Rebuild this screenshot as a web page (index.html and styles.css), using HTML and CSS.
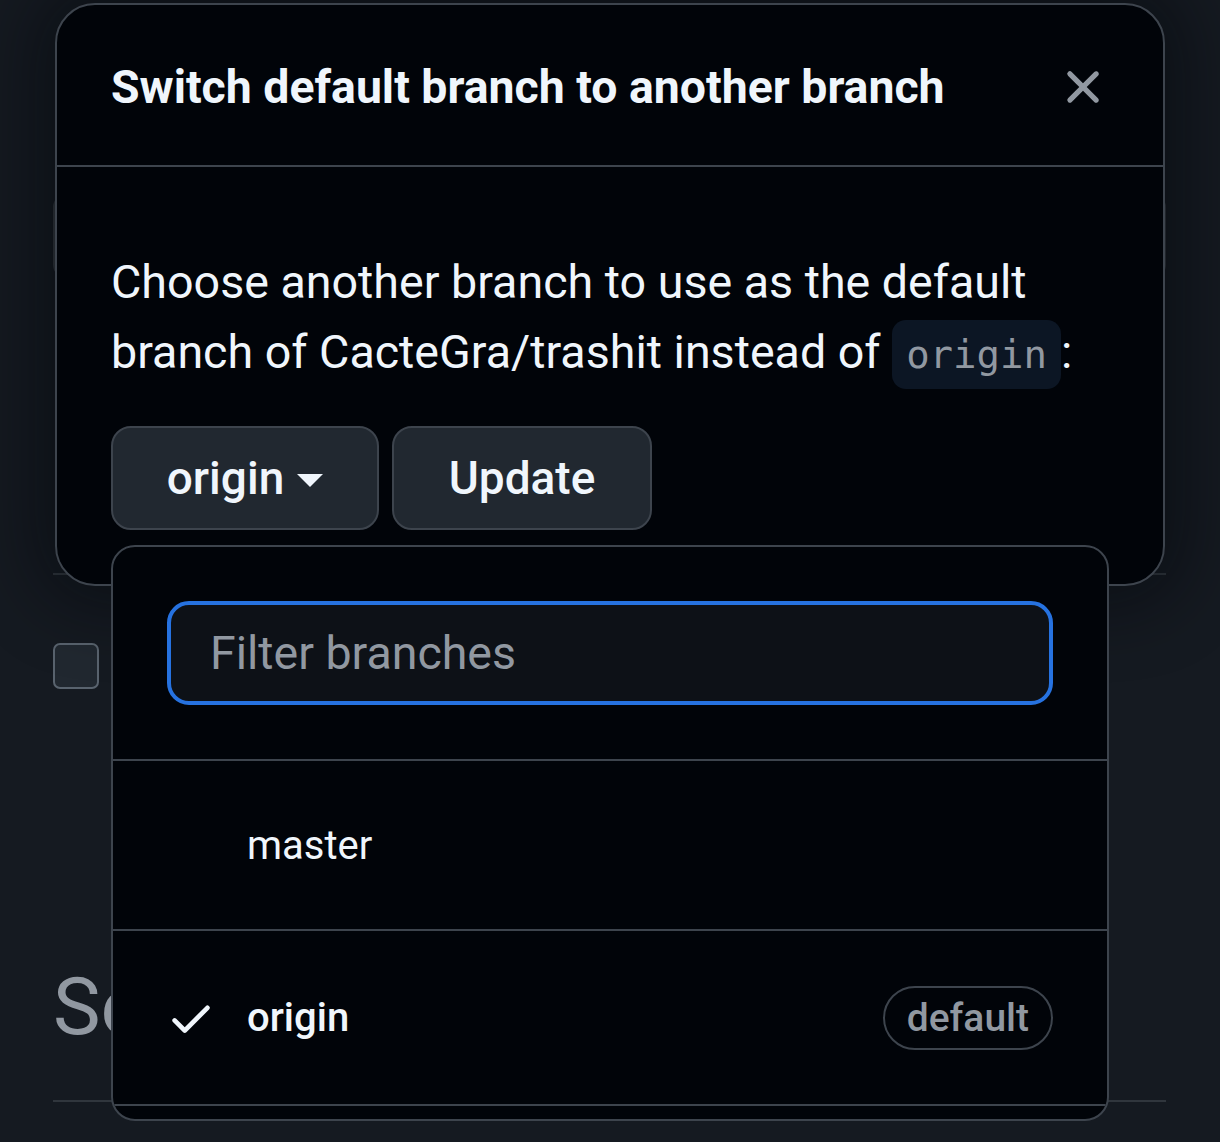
FILE: index.html
```html
<!DOCTYPE html>
<html lang="en">
<head>
<meta charset="utf-8">
<title>Switch default branch</title>
<link rel="stylesheet" href="styles.css">
</head>
<body>
<div class="page">
  <div class="bg-box"></div>
  <div class="bg-rule first"></div>
  <div class="bg-check"></div>
  <div class="bg-heading">Se</div>
  <div class="bg-rule last"></div>
</div>

<div class="modal">
  <div class="modal-header">
    <h2 class="modal-title">Switch default branch to another branch</h2>
    <svg class="close" viewBox="0 0 16 16" width="56" height="56"><path fill="currentColor" d="M3.72 3.72a.75.75 0 0 1 1.06 0L8 6.94l3.22-3.22a.749.749 0 0 1 1.275.326.749.749 0 0 1-.215.734L9.06 8l3.22 3.22a.749.749 0 0 1-.326 1.275.749.749 0 0 1-.734-.215L8 9.06l-3.220 3.22a.751.751 0 0 1-1.042-.018.751.751 0 0 1-.018-1.042L6.94 8 3.720 4.78a.75.75 0 0 1 0-1.06Z"/></svg>
  </div>
  <div class="modal-body">
    <p class="desc">Choose another branch to use as the default branch of CacteGra/trashit instead of <code>origin</code>:</p>
    <div class="actions">
      <button class="btn btn-select">origin<span class="caret"></span></button>
      <button class="btn btn-update">Update</button>
    </div>
  </div>
</div>

<div class="dropdown">
  <div class="filter">
    <div class="filter-input">Filter branches</div>
  </div>
  <div class="item">
    <span class="icon"></span>
    <span class="name">master</span>
  </div>
  <div class="item selected">
    <span class="icon"><svg viewBox="0 0 16 16" width="50" height="50"><path fill="currentColor" d="M13.78 4.22a.75.75 0 0 1 0 1.06l-7.25 7.25a.75.75 0 0 1-1.06 0L2.22 9.28a.751.751 0 0 1 .018-1.042.751.751 0 0 1 1.042-.018L6 10.94l6.72-6.72a.75.75 0 0 1 1.060 0Z"/></svg></span>
    <span class="name">origin</span>
    <span class="badge">default</span>
  </div>
  <div class="list-end"></div>
</div>
</body>
</html>
```

FILE: styles.css
```css
* { box-sizing: border-box; }

html, body {
  margin: 0;
  padding: 0;
}

body {
  width: 1220px;
  height: 1142px;
  overflow: hidden;
  background: #151a21;
  font-family: Roboto, "Noto Sans", sans-serif;
  color: #f0f6fc;
  position: relative;
}

/* background page */
.page {
  padding: 0 54px 0 53px;
  display: flex;
  flex-direction: column;
}

.bg-box {
  margin-top: 195px;
  height: 82px;
  border: 2px solid #30363d;
  border-radius: 12px;
}

.bg-rule {
  height: 2px;
  background: #30363d;
}

.bg-rule.first { margin-top: 296px; }

.bg-check {
  margin-top: 68px;
  width: 46px;
  height: 46px;
  border: 2px solid #59636e;
  border-radius: 7px;
  background: #212830;
}

.bg-heading {
  margin-top: 268px;
  font-size: 80px;
  line-height: 100px;
  color: #9198a1;
  white-space: nowrap;
}

.bg-rule.last { margin-top: 43px; }

/* modal */
.modal {
  position: absolute;
  left: 55px;
  top: 3px;
  width: 1110px;
  height: 583px;
  background: #010409;
  border: 2px solid #3d444d;
  border-radius: 40px;
  box-shadow: 0 0 70px 20px rgba(1, 4, 9, 0.45);
  display: flex;
  flex-direction: column;
}

.modal-header {
  height: 162px;
  border-bottom: 2px solid #3d444d;
  display: flex;
  align-items: center;
  justify-content: space-between;
  padding: 4px 52px 0 54px;
}

.modal-title {
  margin: 0;
  font-size: 46.4px;
  font-weight: 700;
  color: #f0f6fc;
}

.close {
  color: #9198a1;
  display: block;
}

.modal-body {
  padding: 80px 54px 0;
}

.desc {
  margin: 0;
  font-size: 46.6px;
  line-height: 70px;
  color: #f0f6fc;
}

.desc code {
  font-family: "DejaVu Sans Mono", "Liberation Mono", monospace;
  font-size: 39px;
  color: #9198a1;
  background: #0c1624;
  border-radius: 14px;
  padding: 12px 14px;
}

.actions {
  margin-top: 36px;
  display: flex;
  gap: 13px;
}

.btn {
  height: 104px;
  background: #212830;
  border: 2px solid #3d444d;
  border-radius: 20px;
  color: #f0f6fc;
  font-family: Roboto, "Noto Sans", sans-serif;
  font-size: 46px;
  font-weight: 500;
  display: flex;
  align-items: center;
  justify-content: center;
  padding: 0;
}

.btn-select { width: 268px; gap: 13px; }
.btn-update { width: 260px; }

.caret {
  width: 0;
  height: 0;
  border-left: 13px solid transparent;
  border-right: 13px solid transparent;
  border-top: 13px solid #f0f6fc;
  margin-top: 4px;
}

/* dropdown menu */
.dropdown {
  position: absolute;
  left: 111px;
  top: 545px;
  width: 998px;
  height: 576px;
  background: #010409;
  border: 2px solid #3d444d;
  border-radius: 24px;
  overflow: hidden;
  display: flex;
  flex-direction: column;
}

.filter {
  padding: 54px;
  border-bottom: 2px solid #3d444d;
}

.filter-input {
  height: 104px;
  border: 4px solid #2672e0;
  border-radius: 22px;
  background: #0d1117;
  color: #9198a1;
  font-size: 46.5px;
  display: flex;
  align-items: center;
  padding-left: 39px;
}

.item {
  display: flex;
  align-items: center;
  height: 170px;
  padding: 0 54px 0 56px;
  border-bottom: 2px solid #3d444d;
  font-size: 40px;
}

.item.selected {
  height: 175px;
  font-weight: 500;
}

.icon {
  width: 78px;
  display: flex;
  align-items: center;
  color: #f0f6fc;
  margin-left: -3px;
  margin-right: 3px;
}

.name { flex: 1; }

.badge {
  height: 64px;
  padding: 0 22px;
  border: 2px solid #3d444d;
  border-radius: 32px;
  color: #9198a1;
  font-size: 39px;
  font-weight: 500;
  display: flex;
  align-items: center;
}

.list-end { flex: 1; }
```
